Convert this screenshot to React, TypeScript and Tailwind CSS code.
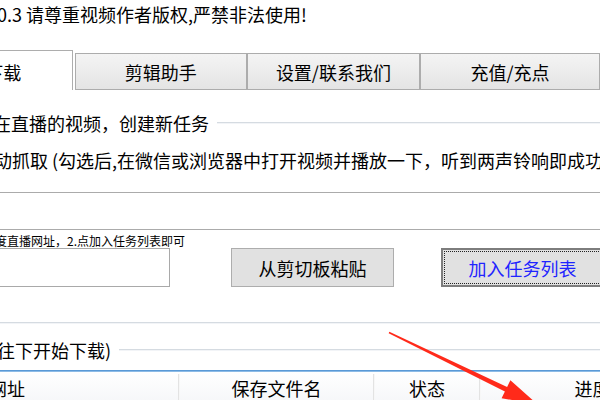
import React from "react";

export default function App() {
  return (
    <div className="relative w-[600px] h-[400px] overflow-hidden bg-white text-black font-['Noto_Sans_CJK_SC','Noto_Sans',sans-serif] text-[18px]">
      <div className="flex flex-col">
        {/* title */}
        <div className="h-[28px] flex items-center ml-[-3px] whitespace-nowrap leading-none">
          0.3 请尊重视频作者版权,严禁非法使用!
        </div>

        {/* tabs */}
        <div className="mt-[22px] h-[40px] flex items-end whitespace-nowrap">
          <div className="ml-[-66px] w-[144px] h-[40px] bg-white border-l border-t border-r border-[#adadad] flex items-center justify-center pt-[2px] leading-none">
            下载
          </div>
          <div className="ml-[2px] w-[179px] h-[37px] border border-[#acacac] bg-linear-to-b from-[#f4f4f4] to-[#e4e4e4] flex items-center justify-center leading-none">
            剪辑助手
          </div>
          <div className="w-[180px] h-[37px] border border-[#acacac] bg-linear-to-b from-[#f4f4f4] to-[#e4e4e4] flex items-center justify-center leading-none">
            设置/联系我们
          </div>
          <div className="w-[180px] shrink-0 h-[37px] border border-[#acacac] bg-linear-to-b from-[#f4f4f4] to-[#e4e4e4] flex items-center justify-center leading-none">
            充值/充点
          </div>
        </div>

        {/* group 1 title */}
        <div className="mt-[20px] h-[26px] flex items-center whitespace-nowrap">
          <span className="ml-[-7px] leading-none">在直播的视频，创建新任务</span>
          <div className="flex-1 ml-[8px] h-[2px] border-t border-[#d5dbe1] bg-[#f2f4f7]" />
        </div>

        {/* checkbox row */}
        <div className="mt-[12px] h-[24px] flex items-center ml-[-6px] whitespace-nowrap leading-none">
          动抓取 (勾选后,在微信或浏览器中打开视频并播放一下，听到两声铃响即成功
        </div>

        {/* textbox */}
        <div className="mt-[20px] h-[38px] border-y border-[#ababab] bg-white" />

        {/* hint */}
        <div className="h-[18px] pt-[5px] ml-[-5px] text-[12px] leading-[12px] whitespace-nowrap">
          度直播网址，2.点加入任务列表即可
        </div>

        {/* input + buttons */}
        <div className="h-[39px] flex whitespace-nowrap">
          <div className="ml-[-20px] w-[190px] shrink-0 h-[39px] border border-[#a9a9a9] bg-white" />
          <div className="ml-[61px] w-[163px] shrink-0 h-[39px] border border-[#adadad] bg-[#e1e1e1] flex items-center justify-center leading-none">
            从剪切板粘贴
          </div>
          <div className="ml-[47px] w-[163px] shrink-0 h-[39px] border-2 border-[#7d7d7d] bg-[#e1e1e1] p-[1px]">
            <div className="w-full h-full border border-dotted border-[#222] flex items-center justify-center leading-none text-[#1f24ff]">
              加入任务列表
            </div>
          </div>
        </div>

        {/* group bottom line */}
        <div className="mt-[35px] h-[2px] border-t border-[#d5dbe1] bg-[#f2f4f7]" />

        {/* group 2 title */}
        <div className="mt-[14px] h-[24px] flex items-center whitespace-nowrap">
          <span className="ml-[-3px] leading-none">往下开始下载)</span>
          <div className="flex-1 ml-[8px] h-[2px] border-t border-[#d5dbe1] bg-[#f2f4f7]" />
        </div>

        {/* table header */}
        <div className="mt-[8px] h-[2px] border-t border-[#5a99d6] bg-[#8dbbe6]" />
        <div className="h-[30px] flex whitespace-nowrap bg-linear-to-b from-white to-[#f6f7f9]">
          <div className="w-[178px] shrink-0 flex items-center pt-[2px] leading-none">
            <span className="ml-[-11px]">网址</span>
          </div>
          <div className="w-[2px] shrink-0 mt-[2px] border-l border-[#e3e3e3] bg-[#f7f7f7]" />
          <div className="w-[193px] shrink-0 flex items-center justify-center pt-[2px] leading-none">
            保存文件名
          </div>
          <div className="w-[2px] shrink-0 mt-[2px] border-l border-[#e3e3e3] bg-[#f7f7f7]" />
          <div className="w-[104px] shrink-0 flex items-center justify-center pt-[2px] leading-none">
            状态
          </div>
          <div className="w-[2px] shrink-0 mt-[2px] border-l border-[#e3e3e3] bg-[#f7f7f7]" />
          <div className="w-[223px] shrink-0 flex items-center justify-center pt-[2px] leading-none">
            进度
          </div>
        </div>
      </div>

      {/* red annotation arrow */}
      <svg
        className="absolute left-0 top-0 pointer-events-none"
        width="600"
        height="400"
        viewBox="0 0 600 400"
      >
        <polygon
          points="389.35,331.8 507.1,386.95 510.4,380.2 537.5,404.4 501.6,398.2 504.9,391.45 388.65,333.2"
          fill="#ff2a1a"
        />
      </svg>
    </div>
  );
}
